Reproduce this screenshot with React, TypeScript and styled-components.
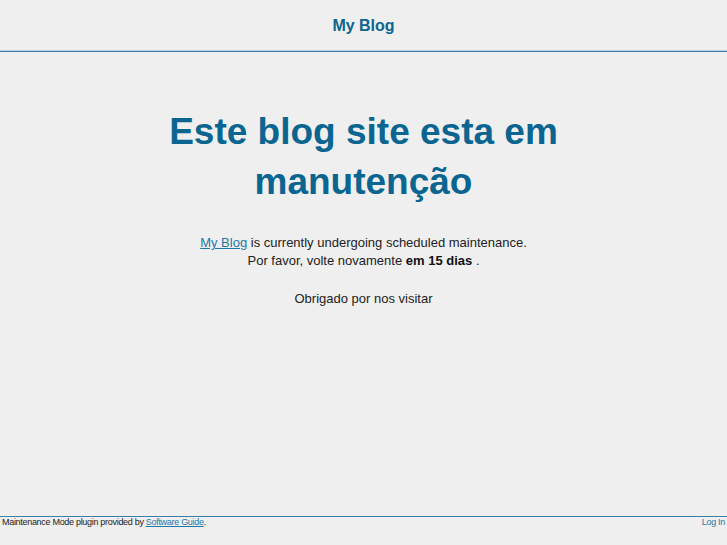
import styled, { createGlobalStyle } from 'styled-components';

const GlobalStyle = createGlobalStyle`
  html, body {
    margin: 0;
    padding: 0;
    background: #efefef;
    font-family: "Liberation Sans", Arial, sans-serif;
    color: #222;
  }
`;

const App = () => {
  return (
    <Page>
      <GlobalStyle />
      <Header>
        <SiteName>My Blog</SiteName>
      </Header>
      <Main>
        <Title>
          Este blog site esta em
          <br />
          manutenção
        </Title>
        <Message>
          <Link href="#">My Blog</Link> is currently undergoing scheduled
          maintenance.
          <br />
          Por favor, volte novamente <strong>em 15 dias</strong> .
        </Message>
        <Message>Obrigado por nos visitar</Message>
      </Main>
      <Footer>
        <FooterText>
          Maintenance Mode plugin provided by{' '}
          <FooterLink href="#">Software Guide</FooterLink>.
        </FooterText>
        <LoginLink href="#">Log In</LoginLink>
      </Footer>
    </Page>
  );
};

export default App;

const Page = styled.div`
  display: flex;
  flex-direction: column;
  min-height: 100vh;
`;

const Header = styled.header`
  height: 51px;
  display: flex;
  align-items: center;
  justify-content: center;
  border-bottom: 1px solid #3f7ea6;
  box-shadow: 0 -1px 0 #b9cfdd inset;
`;

const SiteName = styled.div`
  font-size: 16px;
  font-weight: bold;
  color: #0b6591;
  padding-top: 1px;
`;

const Main = styled.main`
  padding-top: 55px;
  text-align: center;
`;

const Title = styled.h1`
  margin: 0 0 27px;
  font-size: 37px;
  line-height: 50px;
  font-weight: bold;
  color: #0b6591;
`;

const Message = styled.p`
  margin: 0 0 20px;
  font-size: 13px;
  line-height: 18px;
  color: #222;

  strong {
    font-weight: bold;
    color: #111;
  }
`;

const Link = styled.a`
  color: #1e77a8;
  text-decoration: underline;
`;

const Footer = styled.footer`
  margin-top: auto;
  height: 28px;
  display: flex;
  justify-content: space-between;
  align-items: flex-start;
  padding: 0 2px;
  border-top: 1px solid #3f7ea6;
  font-size: 9px;
  line-height: 10px;
`;

const FooterText = styled.span`
  color: #222;
  letter-spacing: -0.3px;
`;

const FooterLink = styled.a`
  color: #1e77a8;
  text-decoration: underline;
`;

const LoginLink = styled.a`
  color: #1e77a8;
  text-decoration: none;
  letter-spacing: -0.3px;
`;
